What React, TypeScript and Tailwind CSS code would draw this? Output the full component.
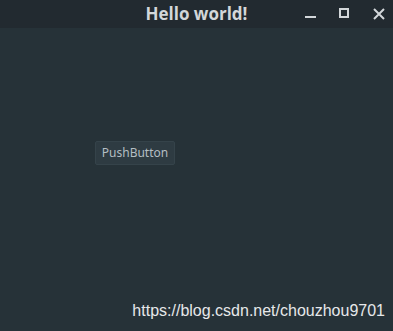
export default function App() {
  return (
    <div className="w-[393px] h-[331px] flex flex-col bg-[#263238] overflow-hidden">
      <div className="h-[28px] flex items-center bg-[#222a30] relative shrink-0">
        <span className="absolute left-0 right-0 text-center text-[17px] font-bold text-[#d3d7da] font-['Open_Sans',sans-serif] leading-[28px]">
          Hello world!
        </span>
        <div className="ml-auto flex items-center gap-[22px] pr-[8px] relative">
          <svg width="12" height="12" viewBox="0 0 12 12">
            <rect x="0" y="8" width="11" height="2" fill="#d3d7da" />
          </svg>
          <svg width="12" height="12" viewBox="0 0 12 12">
            <rect x="1" y="1" width="8" height="8" fill="none" stroke="#d3d7da" strokeWidth="2" />
          </svg>
          <svg width="12" height="12" viewBox="0 0 12 12">
            <path d="M1 1 L11 11 M11 1 L1 11" stroke="#d3d7da" strokeWidth="2" />
          </svg>
        </div>
      </div>
      <div className="flex-1 relative">
        <div className="pt-[113px] pl-[95px] flex">
          <button className="w-[80px] h-[24px] bg-[#2e3b42] border border-[#35434a] rounded-[2px] text-[12px] text-[#b4bec3] font-['Noto_Sans',sans-serif] leading-none">
            PushButton
          </button>
        </div>
        <div className="absolute right-[8px] bottom-[8px] text-[16px] text-[#e6e8ea] font-['Liberation_Sans',sans-serif]">
          https://blog.csdn.net/chouzhou9701
        </div>
      </div>
    </div>
  );
}
